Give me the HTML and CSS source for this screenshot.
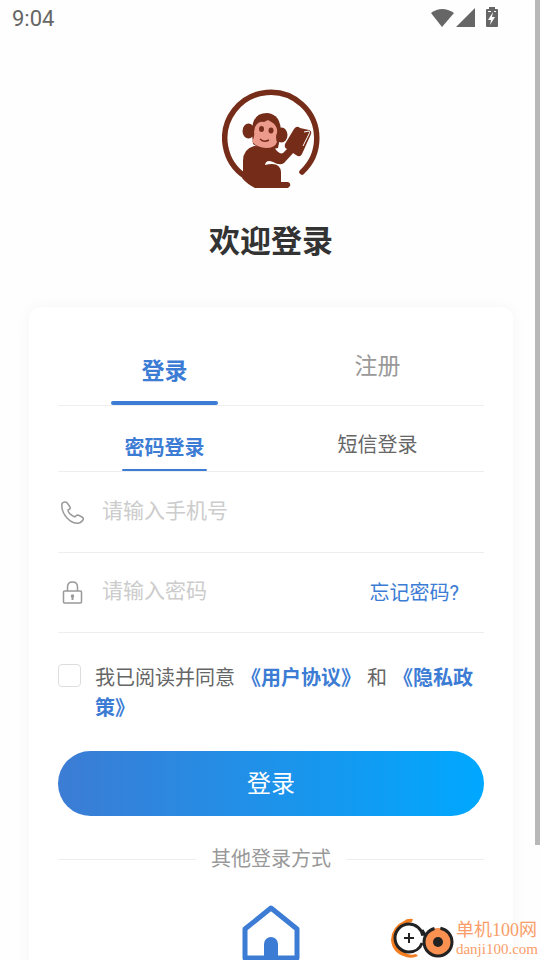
FILE: index.html
```html
<!DOCTYPE html>
<html lang="zh-CN">
<head>
    <meta charset="UTF-8">
    <meta name="viewport" content="width=device-width, initial-scale=1.0">
    <title>登录</title>
    <link rel="stylesheet" href="styles.css">
</head>
<body>
    <div class="status-bar">
        <span class="clock">9:04</span>
        <svg class="status-icons" width="68" height="22" viewBox="0 0 68 22" fill="#666">
            <path d="M1 6Q12 -2 24 6L12 20z"/>
            <path d="M45 1v19H26z"/>
            <path fill-rule="evenodd" d="M59 0h6v2h2q1 0 1 1v16q0 1-1 1H57q-1 0-1-1V3q0-1 1-1h2zM63 5l-5 8h3l-1 5 5-8h-3zM58 4v1h3V4zM64 4v1h2V4z"/>
        </svg>
    </div>

    <div class="header">
        <svg class="logo" viewBox="11 9 99 99">
            <path d="M91 92A46 46 0 1 0 35 97L46 105" fill="none" stroke="#752d19" stroke-width="5.5" stroke-linecap="round"/>
            <g fill="#752d19">
                <path d="M32 97V81Q32 69 43 66L63 67Q68 75 72 73L78 67 84 71 73 83Q69 86 62 82Q55 79 54 85Q69 81 70 92V102H77Q80 103 79 106L77 108H44Q36 104 31 98z"/>
                <ellipse cx="37.500" cy="51" rx="6" ry="7.500"/>
                <ellipse cx="70.500" cy="55" rx="6" ry="7.500"/>
                <path d="M41 54Q40 33 56 33Q70 34 70 53L67 68Q52 72 42 64z"/>
                <path d="M83 49Q86 45 89 48L98 50Q101 51 100 54L91 74Q89 78 85 75L76 69Q73 68 74 64z"/>
            </g>
            <path d="M44 47Q47 41 53 42L57 40 62 43Q67 47 66 53Q64 57 66 62Q64 68 55 68Q44 67 41 61Q44 57 43 52z" fill="#ec9a8b"/>
            <ellipse cx="50.500" cy="49" rx="2.500" ry="3" fill="#752d19"/>
            <ellipse cx="60" cy="50.500" rx="2.500" ry="3" fill="#752d19"/>
            <path d="M49 59Q53 63 58 60" fill="none" stroke="#752d19" stroke-width="1.500"/>
            <path d="M93 52l5-1q1 1 0 3L92 66" fill="none" stroke="#fff"/>
        </svg>
        <h1>欢迎登录</h1>
    </div>

    <form class="card">
        <div class="tabs">
            <button type="button" class="tab active">登录</button>
            <button type="button" class="tab">注册</button>
        </div>
        <div class="sub-tabs">
            <button type="button" class="sub-tab active">密码登录</button>
            <button type="button" class="sub-tab">短信登录</button>
        </div>

        <div class="fields">
            <div class="field">
                <label for="phone" aria-label="手机号">
                    <svg width="28" height="28" viewBox="0 0 28 28" fill="none" stroke="#999" stroke-width="1.500" stroke-linejoin="round">
                        <path d="M4 8Q3 3 7 3Q9 3 10 5L12 8Q13 10 10 11Q10 15 17 18Q18 16 20 16L24 18Q26 19 25 21Q22 25 18 24Q14 24 9 19Q4 13 4 8z"/>
                    </svg>
                </label>
                <input type="tel" id="phone" placeholder="请输入手机号">
            </div>
            <div class="field">
                <label for="password" aria-label="密码">
                    <svg width="28" height="28" viewBox="0 0 28 28" fill="none" stroke="#999" stroke-width="1.500">
                        <rect x="5.500" y="12" width="18" height="12" rx="1"/>
                        <path d="M9.500 12V8Q9.500 3 14.500 3T19.500 8V12"/>
                        <path d="M14.500 16v5" stroke-width="2"/>
                        <circle cx="14.500" cy="17" r="1"/>
                    </svg>
                </label>
                <input type="password" id="password" placeholder="请输入密码">
                <a href="#" class="forgot">忘记密码?</a>
            </div>
        </div>

        <div class="agreement">
            <input type="checkbox" id="agree">
            <label for="agree">我已阅读并同意 <a href="#">《用户协议》</a> 和 <a href="#">《隐私政策》</a></label>
        </div>

        <button type="submit" class="submit">登录</button>

        <div class="other">其他登录方式</div>
        <a href="#" class="home" aria-label="首页">
            <svg width="58" height="58" viewBox="0 0 58 58">
                <path d="M3 53V24L29 3 55 24V53z" fill="none" stroke="#3c7cd4" stroke-width="5" stroke-linejoin="round"/>
                <path d="M22 53V39a7 7 0 0 1 14 0V53z" fill="#3c7cd4"/>
            </svg>
        </a>
    </form>

    <div class="scrollbar"></div>

    <div class="watermark">
        <svg width="64" height="42" viewBox="0 0 64 42">
            <path d="M23 1Q17 0 14 3Q2 8 1 22Q2 35 16 39Q22 41 28 38L26 36Q19 38 14 34Q4 28 5 19Q6 10 14 6L22 4z" fill="#f47d20"/>
            <circle cx="19" cy="20" r="14" fill="#fff" stroke="#222" stroke-width="3" stroke-dasharray="80 8" stroke-dashoffset="-5"/>
            <path d="M19 15v10M14 20h10" stroke="#222" stroke-width="2"/>
            <circle cx="48" cy="24" r="14" fill="#fa9150" stroke="#222" stroke-width="3" stroke-dasharray="62 6 20 0" stroke-dashoffset="0"/>
            <path d="M32 12l3 5" fill="none" stroke="#222" stroke-width="3"/>
            <circle cx="48" cy="24" r="5" fill="#222"/>
        </svg>
        <div class="watermark-text">
            <div class="site-name">单机100网</div>
            <div class="site-url">danji100.com</div>
        </div>
    </div>
</body>
</html>
```

FILE: styles.css
```css
* {
    box-sizing: border-box;
}

body {
    margin: 0;
    height: 100vh;
    overflow: hidden;
    position: relative;
    background: #fefefe;
    color: #666;
    font-family: Roboto, "Noto Sans CJK SC", sans-serif;
    font-size: 20px;
}

button {
    border: 0;
    padding: 0;
    background: none;
    color: inherit;
    font-family: inherit;
}

a {
    color: #3c7cd4;
    text-decoration: none;
}

svg {
    display: block;
}

.status-bar {
    display: flex;
    justify-content: space-between;
    align-items: center;
    height: 36px;
    padding: 0 42px 0 12px;
}

.clock {
    font-size: 22px;
}

.header {
    display: flex;
    flex-direction: column;
    align-items: center;
    padding: 53px 0 0 2px;
}

.logo {
    width: 99px;
    height: 99px;
}

h1 {
    margin: 30px 0 0;
    color: #333;
    font-size: 31px;
    line-height: 48px;
    font-weight: bold;
}

.card {
    margin: 41px 27px 0 29px;
    padding: 28px 29px;
    border-radius: 12px;
    background: #fff;
    box-shadow: 0 0 16px rgba(0, 0, 0, 0.04);
}

.tabs, .sub-tabs {
    display: flex;
    border-bottom: 1px solid #eee;
}

.tab, .sub-tab {
    position: relative;
    flex: 1;
}

.tab {
    height: 70px;
    padding-bottom: 12px;
    color: #999;
    font-size: 23px;
}

.sub-tab {
    height: 65px;
    padding-top: 10px;
    font-size: 20px;
}

.tab.active, .sub-tab.active {
    color: #3c7cd4;
    font-weight: bold;
}

.tab.active {
    padding-bottom: 2px;
}

.sub-tab.active {
    padding-top: 16px;
}

/* line under the selected tab */
.tab.active::after, .sub-tab.active::after {
    content: "";
    position: absolute;
    left: 25%;
    right: 25%;
    bottom: 0;
    height: 4px;
    border-radius: 2px;
    background: #3c7cd4;
}

.sub-tab.active::after {
    left: 30%;
    right: 30%;
    height: 2px;
}

.fields {
    padding-top: 1px;
}

.field {
    display: flex;
    align-items: center;
    height: 80px;
    border-bottom: 1px solid #eee;
}

.field input {
    flex: 1;
    min-width: 0;
    margin-left: 16px;
    padding: 0 0 4px;
    border: 0;
    outline: none;
    background: none;
    font-family: inherit;
    font-size: 21px;
}

.field input::placeholder {
    color: #ccc;
}

.forgot {
    margin-right: 25px;
    padding-bottom: 2px;
}

.agreement {
    display: flex;
    align-items: flex-start;
    gap: 14px;
    margin-top: 30px;
    line-height: 30px;
}

.agreement input {
    appearance: none;
    flex: none;
    width: 23px;
    height: 23px;
    margin: 1px 0 0;
    border: 1px solid #ddd;
    border-radius: 4px;
}

.agreement input:checked {
    background: #3c7cd4;
}

.agreement a {
    margin: 0 1px;
    font-weight: bold;
}

.submit {
    display: block;
    width: 100%;
    height: 65px;
    margin-top: 28px;
    padding-bottom: 5px;
    border-radius: 33px;
    background: linear-gradient(to right, #3c7cd4, #00a8ff);
    color: #fff;
    font-size: 24px;
}

.other {
    display: flex;
    align-items: center;
    gap: 15px;
    margin-top: 28px;
    line-height: 30px;
    color: #999;
}

.other::before, .other::after {
    content: "";
    flex: 1;
    height: 1px;
    background: #eee;
}

.home {
    display: flex;
    justify-content: center;
    margin-top: 31px;
}

.scrollbar {
    position: absolute;
    top: 0;
    right: 0;
    width: 5px;
    height: 88%;
    background: #b8b8b8;
}

.watermark {
    position: absolute;
    right: 2px;
    bottom: 0;
    display: flex;
    align-items: center;
    gap: 2px;
    color: #fa9d68;
    font-family: "Liberation Serif", "Noto Sans CJK SC", serif;
}

.site-name {
    font-size: 18px;
    line-height: 20px;
}

.site-url {
    font-size: 15px;
    line-height: 18px;
}
```
